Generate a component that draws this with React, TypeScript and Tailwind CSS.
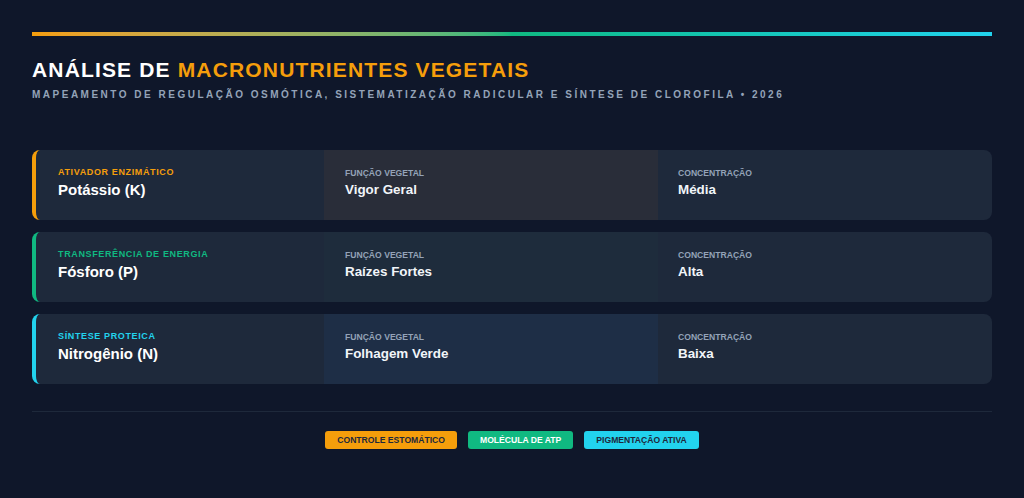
const rows = [
  {
    tag: "Ativador Enzimático",
    name: "Potássio (K)",
    func: "Vigor Geral",
    conc: "Média",
    border: "border-[#f59e0b]",
    tagColor: "text-[#f59e0b]",
    mid: "bg-[#292d39]",
  },
  {
    tag: "Transferência de Energia",
    name: "Fósforo (P)",
    func: "Raízes Fortes",
    conc: "Alta",
    border: "border-[#10b981]",
    tagColor: "text-[#10b981]",
    mid: "bg-[#1e2c3c]",
  },
  {
    tag: "Síntese Proteica",
    name: "Nitrogênio (N)",
    func: "Folhagem Verde",
    conc: "Baixa",
    border: "border-[#22d3ee]",
    tagColor: "text-[#22d3ee]",
    mid: "bg-[#1e2e46]",
  },
]

export default function App() {
  return (
    <div className="min-h-[498px] bg-[#0f172a] px-8 pt-8 pb-10 font-['Liberation_Sans',Arial,sans-serif]">
      <div className="h-1 w-full bg-gradient-to-r from-[#f59e0b] via-[#10b981] to-[#22d3ee]" />

      <h1 className="mt-[20px] text-[21px] leading-[28px] font-bold tracking-[0.055em] text-white uppercase">
        Análise de <span className="text-[#f59e0b]">Macronutrientes Vegetais</span>
      </h1>
      <p className="mt-[4px] text-[10px] leading-[14px] font-bold tracking-[0.25em] text-[#94a3b8] uppercase">
        Mapeamento de regulação osmótica, sistematização radicular e síntese de clorofila • 2026
      </p>

      <div className="mt-[48px] flex flex-col gap-3">
        {rows.map((r) => (
          <div
            key={r.name}
            className={`flex h-[70px] overflow-hidden rounded-lg border-l-4 bg-[#1e293b] ${r.border}`}
          >
            <div className="flex w-[288px] flex-col justify-center pb-1 pl-[22px]">
              <span className={`text-[9px] leading-[12px] font-bold tracking-[0.07em] uppercase ${r.tagColor}`}>
                {r.tag}
              </span>
              <span className="mt-[2px] text-[15px] leading-[20px] font-bold text-white">{r.name}</span>
            </div>
            <div className={`flex w-[334px] flex-col justify-center pb-1 pl-[21px] ${r.mid}`}>
              <span className="text-[8.6px] leading-[12px] font-bold text-[#94a3b8] uppercase">Função Vegetal</span>
              <span className="mt-[2px] text-[13.4px] leading-[18px] font-bold text-[#f1f5f9]">{r.func}</span>
            </div>
            <div className="flex flex-1 flex-col justify-center pb-1 pl-5">
              <span className="text-[8.6px] leading-[12px] font-bold text-[#94a3b8] uppercase">Concentração</span>
              <span className="mt-[2px] text-[13.4px] leading-[18px] font-bold text-[#f1f5f9]">{r.conc}</span>
            </div>
          </div>
        ))}
      </div>

      <div className="mt-[27px] h-px w-full bg-[#1e293b]" />

      <div className="mt-[19px] flex justify-center gap-[11px]">
        <span className="flex h-[18px] items-center rounded-[3px] bg-[#f59e0b] px-3 text-[8.6px] font-bold text-[#1e293b] uppercase">
          Controle Estomático
        </span>
        <span className="flex h-[18px] items-center rounded-[3px] bg-[#10b981] px-3 text-[8.6px] font-bold text-white uppercase">
          Molécula de ATP
        </span>
        <span className="flex h-[18px] items-center rounded-[3px] bg-[#22d3ee] px-3 text-[8.6px] font-bold text-[#1e293b] uppercase">
          Pigmentação Ativa
        </span>
      </div>
    </div>
  )
}
